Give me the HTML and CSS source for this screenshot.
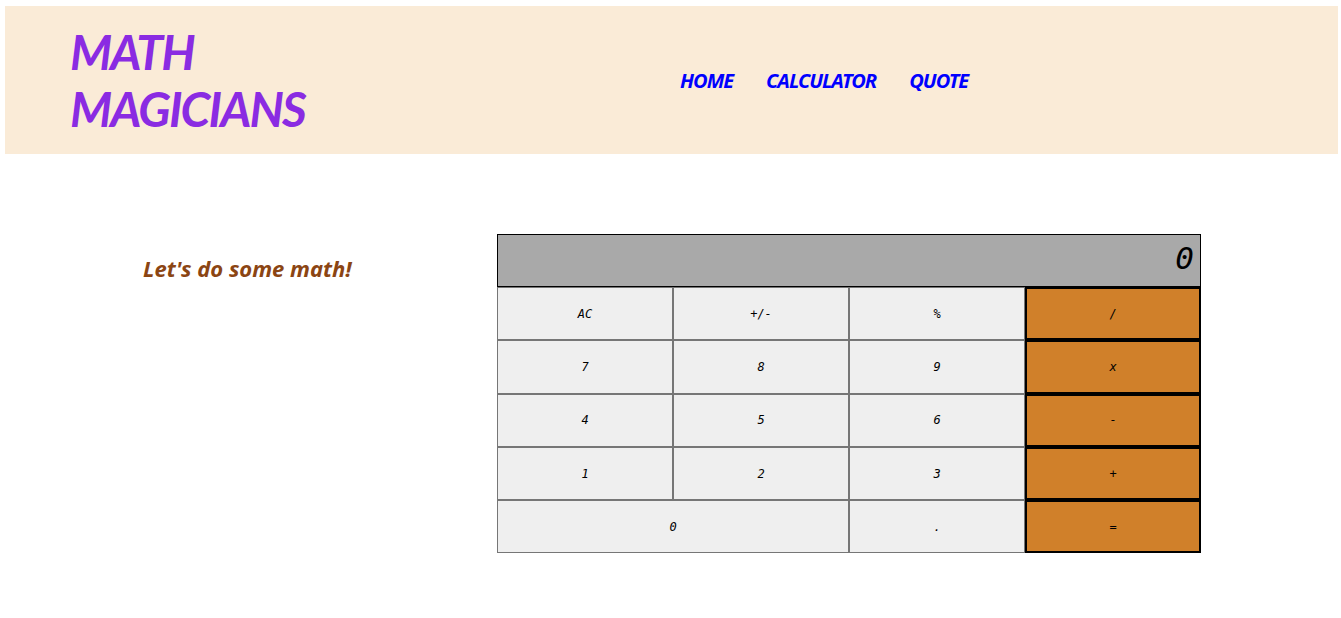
FILE: index.html
```html
<!DOCTYPE html>
<html lang="en">
<head>
<meta charset="utf-8">
<title>Math Magicians</title>
<link rel="stylesheet" href="styles.css">
</head>
<body>
<header class="header">
  <h1 class="logo"><span class="logo-line">MATH</span><span class="logo-line">MAGICIANS</span></h1>
  <nav class="nav">
    <a class="nav-link" href="#">HOME</a>
    <a class="nav-link" href="#">CALCULATOR</a>
    <a class="nav-link" href="#">QUOTE</a>
  </nav>
</header>
<main class="main">
  <h2 class="intro">Let's do some math!</h2>
  <div class="calculator">
    <div class="display">0</div>
    <button class="key">AC</button>
    <button class="key">+/-</button>
    <button class="key">%</button>
    <button class="key op">/</button>
    <button class="key">7</button>
    <button class="key">8</button>
    <button class="key">9</button>
    <button class="key op">x</button>
    <button class="key">4</button>
    <button class="key">5</button>
    <button class="key">6</button>
    <button class="key op">-</button>
    <button class="key">1</button>
    <button class="key">2</button>
    <button class="key">3</button>
    <button class="key op">+</button>
    <button class="key wide">0</button>
    <button class="key">.</button>
    <button class="key op">=</button>
  </div>
</main>
</body>
</html>
```
FILE: styles.css
```css
* { box-sizing: border-box; }
body {
  margin: 0;
  font-family: "Noto Sans", "DejaVu Sans", sans-serif;
  font-style: italic;
  background: #fff;
}
.header {
  margin: 6px 3px 0 5px;
  height: 148px;
  background: #faebd7;
  display: flex;
  align-items: center;
  padding-left: 65px;
}
.logo {
  margin: 0;
  width: 610px;
  display: flex;
  flex-direction: column;
  font-family: Lato, "Noto Sans", sans-serif;
  font-size: 48px;
  font-weight: 700;
  font-style: italic;
  color: #8a2be2;
  letter-spacing: -1.9px;
}
.logo-line {
  display: block;
  height: 57px;
  line-height: 57px;
}
.nav {
  display: flex;
  gap: 33px;
}
.nav-link {
  color: #0000ff;
  text-decoration: none;
  font-weight: 700;
  font-size: 20px;
  letter-spacing: -1px;
}
.main {
  display: flex;
  align-items: flex-start;
  padding: 80px 0 0 143px;
}
.intro {
  margin: 19px 0 0 0;
  width: 354px;
  font-size: 22px;
  font-weight: 700;
  color: #8b4513;
}
.calculator {
  display: grid;
  grid-template-columns: repeat(4, 176px);
  grid-template-rows: 53px repeat(5, 53.3px);
}
.display {
  grid-column: 1 / 5;
  background: #a9a9a9;
  border: 1px solid #000;
  text-align: right;
  font-size: 31px;
  line-height: 46px;
  padding-right: 6px;
  font-family: "DejaVu Sans Mono", monospace;
  font-style: italic;
}
.key {
  margin: 0;
  background: #efefef;
  border: 1px solid #767676;
  font-family: "DejaVu Sans Mono", monospace;
  font-style: italic;
  font-size: 12px;
  color: #000;
  padding: 0;
}
.key.wide { grid-column: span 2; }
.key.op {
  background: #d0802a;
  border: 2px solid #000;
}
```
